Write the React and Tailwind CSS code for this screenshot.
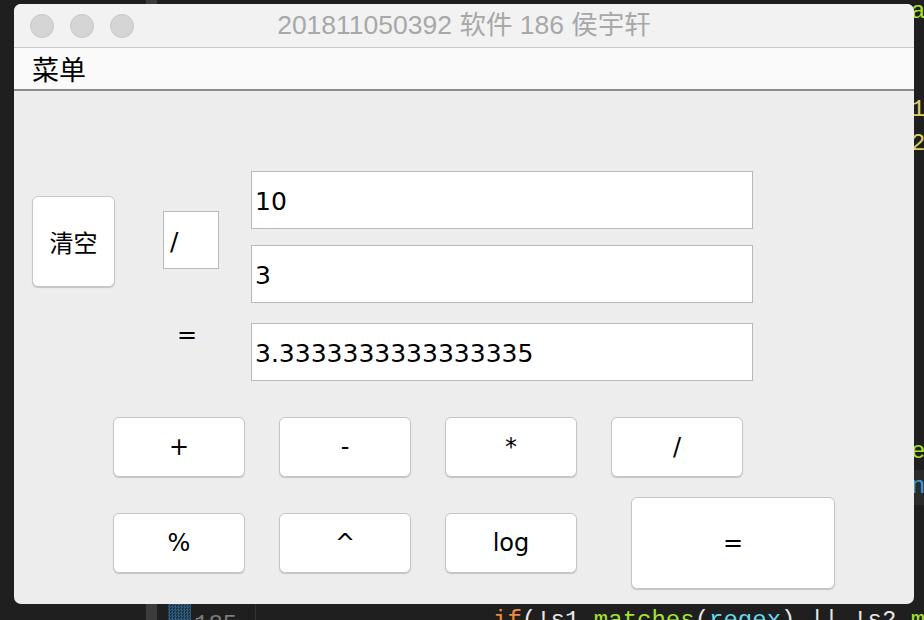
import React from 'react';

const ui = { fontFamily: '"DejaVu Sans", "Noto Sans CJK SC", sans-serif' };
const cjk = { fontFamily: '"Noto Sans CJK SC", "DejaVu Sans", sans-serif' };
const title = { fontFamily: '"Liberation Sans", "Noto Sans CJK SC", sans-serif' };
const mono = { fontFamily: '"Liberation Mono", monospace' };

function Btn({ children, className = '' }) {
  return (
    <button
      style={ui}
      className={`bg-white border border-[#c6c6c6] rounded-[6px] shadow-[0_1px_1px_rgba(0,0,0,0.18)] text-[24px] text-black flex items-center justify-center ${className}`}
    >
      {children}
    </button>
  );
}

function Field({ value, className = '' }) {
  return (
    <div
      style={ui}
      className={`bg-white border border-[#b9b9b9] flex items-center pl-[3px] pt-[3px] text-[25px] text-black ${className}`}
    >
      {value}
    </div>
  );
}

export default function App() {
  return (
    <div className="relative w-[924px] h-[620px] bg-[#1f1f1f] overflow-hidden">
      {/* editor behind the window */}
      <div className="absolute left-[146px] top-0 w-[11px] h-[5px] bg-[#3c3c3c]" />
      <div className="absolute left-[146px] top-[604px] w-[11px] h-[16px] bg-[#3c3c3c]" />
      <div className="absolute left-[168px] top-[604px] w-[23px] h-[16px] bg-[repeating-conic-gradient(#2c5d80_0_25%,#1f3140_0_50%)] bg-[length:3px_3px]" />
      <div className="absolute left-[255px] top-[604px] w-px h-[16px] bg-[#333]" />
      <div style={mono} className="absolute left-[194px] top-[613px] text-[24px] leading-[24px] text-[#7b7b7b]">185</div>
      <div style={mono} className="absolute left-[493px] top-[609px] text-[24px] leading-[24px] whitespace-pre text-[#e8e8e8]">
        <span className="text-[#f08a3c]">if</span>(!s1.<span className="text-[#a6e22e]">matches</span>(<span className="text-[#66d9ef]">regex</span>) || !s2.<span className="text-[#a6e22e]">m</span>
      </div>
      <div className="absolute left-[912px] top-[470px] w-[12px] h-[35px] bg-[#2a2a2a]" />
      <div style={mono} className="absolute left-[911px] top-0 text-[24px] leading-[24px] text-[#a6e22e]">a</div>
      <div style={mono} className="absolute left-[911px] top-[98px] text-[24px] leading-[24px] text-[#d9cf62]">1</div>
      <div style={mono} className="absolute left-[911px] top-[132px] text-[24px] leading-[24px] text-[#d9cf62]">2</div>
      <div style={mono} className="absolute left-[911px] top-[440px] text-[24px] leading-[24px] text-[#a6e22e]">e</div>
      <div style={mono} className="absolute left-[911px] top-[475px] text-[24px] leading-[24px] text-[#3a9bd9]">n</div>

      {/* window */}
      <div className="absolute left-[14px] top-[4px] w-[900px] h-[600px] rounded-[7px] overflow-hidden flex flex-col bg-[#ededed]">
        <div className="relative h-[44px] bg-[#f2f2f2] border-b border-[#c9c9c9] flex items-center justify-center">
          <div className="absolute left-[16px] top-[10px] flex gap-[16px]">
            <span className="w-[24px] h-[24px] rounded-full bg-[#d5d5d5] border border-[#c6c6c6]" />
            <span className="w-[24px] h-[24px] rounded-full bg-[#d5d5d5] border border-[#c6c6c6]" />
            <span className="w-[24px] h-[24px] rounded-full bg-[#d5d5d5] border border-[#c6c6c6]" />
          </div>
          <span style={title} className="text-[26.5px] text-[#a8a8a8] whitespace-pre">201811050392 软件 186 侯宇轩</span>
        </div>
        <div className="h-[43px] bg-[#fafafa] border-b-2 border-[#8c8c8c] flex items-center pl-[18px]">
          <span style={cjk} className="text-[27px] text-black leading-none">菜单</span>
        </div>

        <div className="flex-1 pt-[80px]">
          <div className="flex pl-[18px]">
            <Btn className="mt-[25px] w-[83px] h-[91px]">
              <span style={cjk}>清空</span>
            </Btn>
            <div className="ml-[48px] w-[56px] flex flex-col">
              <Field value="/" className="mt-[40px] h-[58px] pl-[6px]" />
              <div style={ui} className="mt-[52px] pl-[14px] text-[24px] leading-[28px] text-black">=</div>
            </div>
            <div className="ml-[32px] w-[502px] flex flex-col">
              <Field value="10" className="h-[58px]" />
              <Field value="3" className="mt-[16px] h-[58px]" />
              <Field value="3.3333333333333335" className="mt-[20px] h-[58px]" />
            </div>
          </div>

          <div className="flex gap-[34px] pl-[99px] mt-[36px]">
            <Btn className="w-[132px] h-[60px]">+</Btn>
            <Btn className="w-[132px] h-[60px]">-</Btn>
            <Btn className="w-[132px] h-[60px]">*</Btn>
            <Btn className="w-[132px] h-[60px]">/</Btn>
          </div>
          <div className="flex items-center gap-[34px] pl-[99px] mt-[20px]">
            <Btn className="w-[132px] h-[60px]">%</Btn>
            <Btn className="w-[132px] h-[60px]">^</Btn>
            <Btn className="w-[132px] h-[60px]">log</Btn>
            <Btn className="ml-[20px] w-[204px] h-[92px]">=</Btn>
          </div>
        </div>
      </div>
    </div>
  );
}
